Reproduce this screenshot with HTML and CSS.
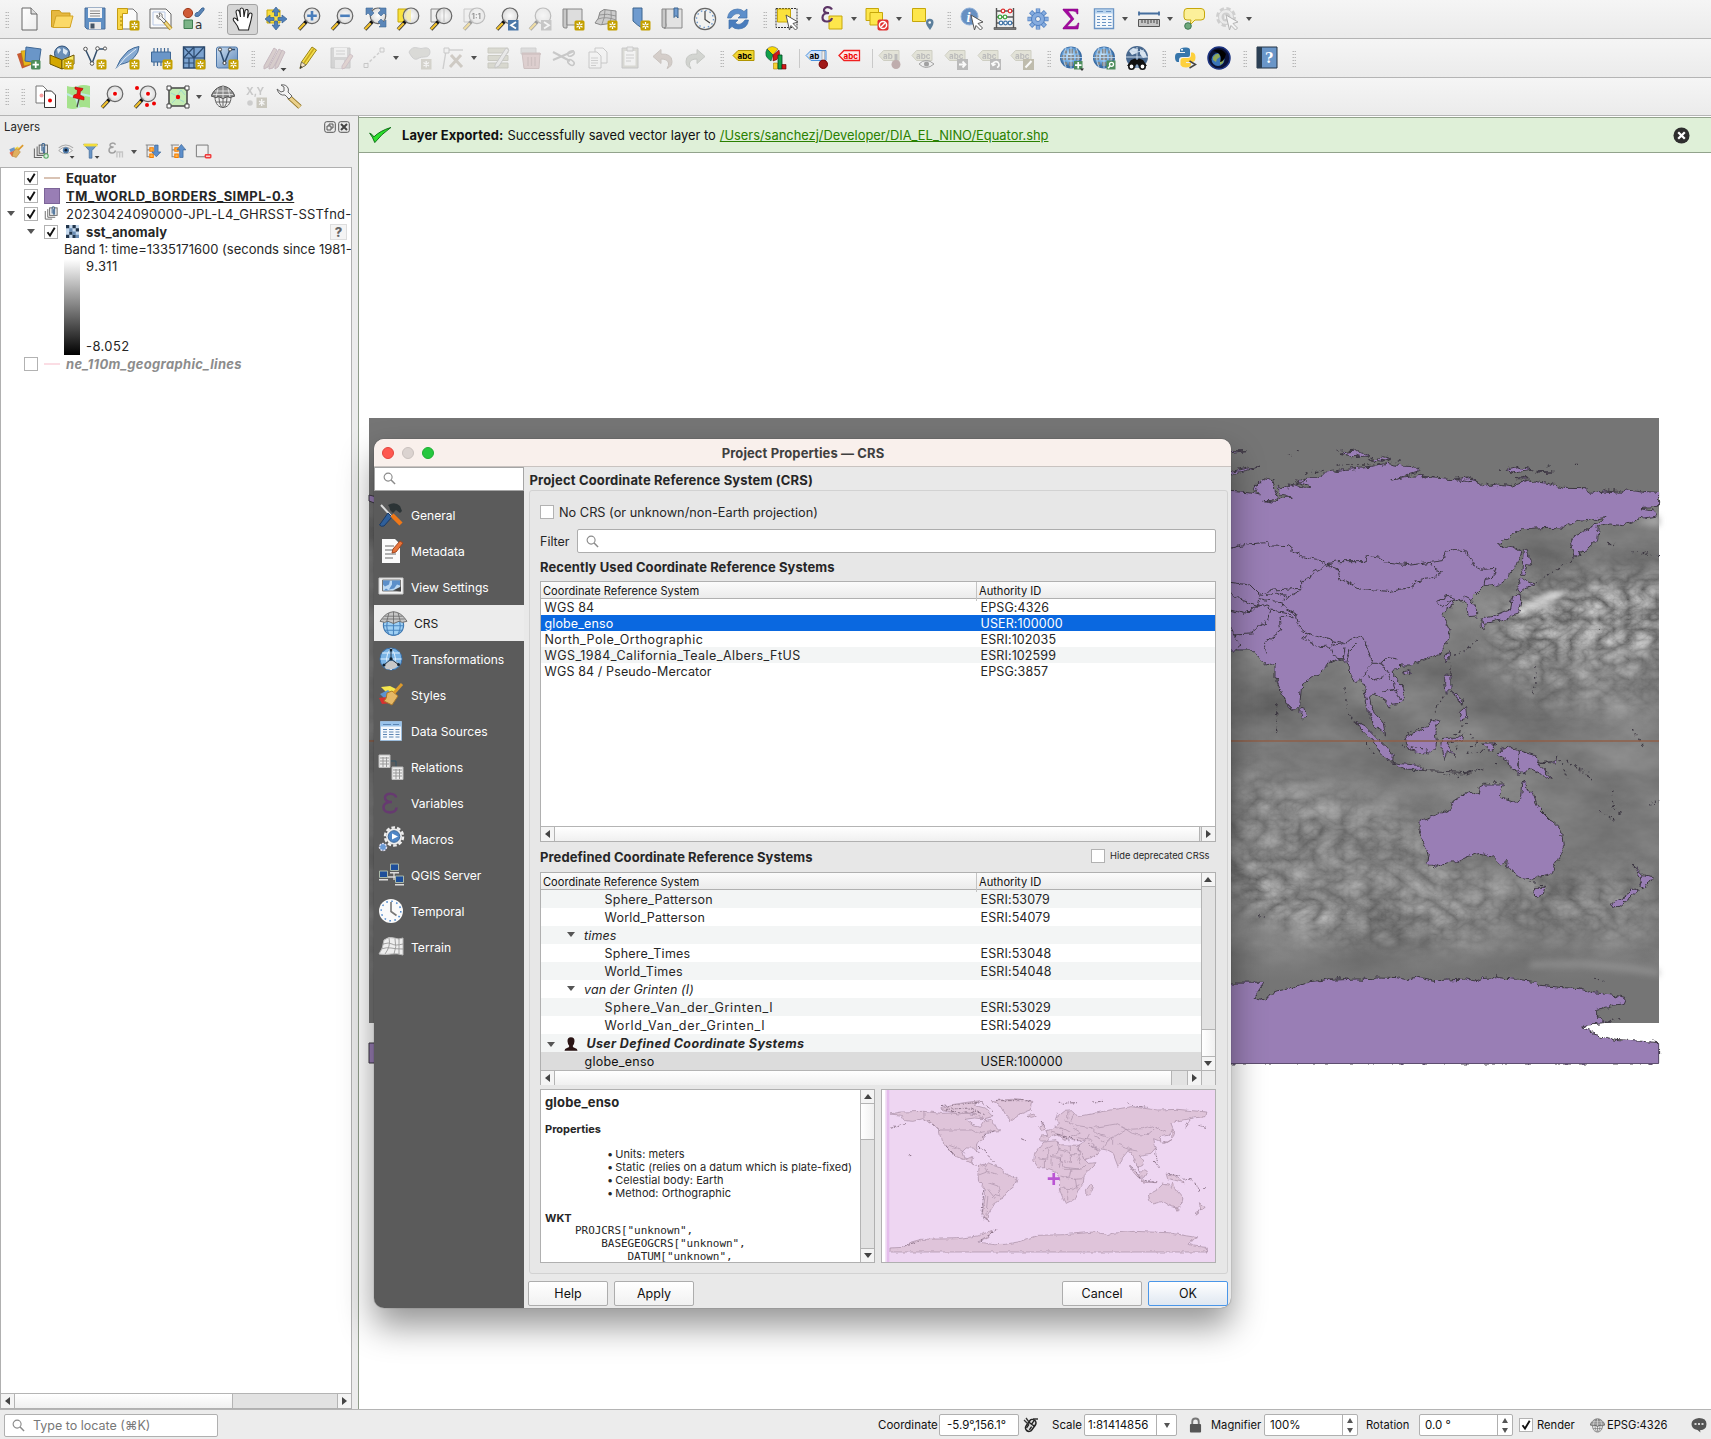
FILE: index.html
```html
<!DOCTYPE html>
<html lang="en">
<head>
<meta charset="utf-8">
<title>Project Properties — CRS</title>
<link rel="stylesheet" href="styles.css">
</head>
<body>
<svg class="defs" width="0" height="0">
  <defs>
    <linearGradient id="gBlue" x1="0" y1="0" x2="1" y2="1"><stop offset="0" stop-color="#cfe0f2"/><stop offset="1" stop-color="#5b86b8"/></linearGradient>
    <linearGradient id="gPage" x1="0" y1="0" x2="1" y2="1"><stop offset="0" stop-color="#fff"/><stop offset="1" stop-color="#ececec"/></linearGradient>
    <radialGradient id="gGlass"><stop offset="0" stop-color="#fff"/><stop offset="1" stop-color="#d8d8d8"/></radialGradient>
    <radialGradient id="gGlobe" cx=".45" cy=".4"><stop offset="0" stop-color="#d6efff"/><stop offset=".6" stop-color="#78b0e4"/><stop offset="1" stop-color="#3a6ea5"/></radialGradient>
  </defs>
  <symbol id="star" viewBox="0 0 24 24"><rect x="13.5" y="13.5" width="10" height="10" rx="1.5" fill="#c4a000"/><path d="M18.5 15v7M15.5 16.8l6 3.4M21.5 16.800l-6 3.400" stroke="#fff" stroke-width="1.300"/><circle cx="18.500" cy="18.500" r="1" fill="#c4a000"/></symbol>
  <symbol id="mag" viewBox="0 0 24 24"><path d="M9.500 14.500L2 22.500" stroke="#333" stroke-width="3.600"/><path d="M8 16L2 22.200" stroke="#f2c22e" stroke-width="2.200"/><path d="M10.500 13L7.500 16" stroke="#111" stroke-width="3"/><circle cx="15" cy="8.800" r="7.800" fill="url(#gGlass)" fill-opacity=".85" stroke="#666" stroke-width="1.200"/></symbol>
  <symbol id="globe" viewBox="0 0 24 24"><circle cx="12" cy="11.500" r="11" fill="#3566a0"/><circle cx="12" cy="11.500" r="10.500" fill="url(#gGlobe)"/><path d="M5 4.500h3v3H5zM10 3h4v4.500h-4zM16 4.500h3v3h-3zM3 9h4v5H3zM9 9h6v5H9zM17 9h4v5h-4zM5 16h3v3H5zM10 16h4v4h-4zM16 16h3v3h-3z" fill="#858585" opacity=".9"/><path d="M1 11.500h22M12 .500v22M7 2c-3 6-3 13 0 19M17 2c3 6 3 13 0 19" stroke="#b9d8f6" fill="none" stroke-width=".900"/></symbol>
  <symbol id="cursor" viewBox="0 0 24 24"><path d="M11 8l12 7-5 1.500 4.500 4.500-2 2-4.500-4.500-1.500 4.500z" fill="#fff" stroke="#555" stroke-width="1"/></symbol>
  <symbol id="tagg" viewBox="0 0 24 24"><path d="M1 7.500L5.500 2.500H21v10H5.500z" fill="#dedecf" stroke="#c3c3b4"/></symbol>
  <symbol id="fn" viewBox="0 0 24 24"><path d="M13 5.500C11 2 4.500 2.500 5 6.500c.3 2 2.500 2.700 5 2.500-4 0-6.500 1.500-6.500 4.500 0 5 8 5.500 9.500.5" fill="none" stroke="currentColor" stroke-width="2.200"/></symbol>
  <symbol id="lens" viewBox="0 0 14 14"><circle cx="5.500" cy="5.500" r="4.300" fill="none" stroke="#8a8a8a" stroke-width="1.200"/><path d="M8.700 8.700L13 13" stroke="#8a8a8a" stroke-width="1.600"/></symbol>
  <symbol id="tick" viewBox="0 0 12 12"><path d="M2.500 6.200L5 9.500 9.700 1.800" fill="none" stroke="#111" stroke-width="1.900"/></symbol>
  <symbol id="sheets" viewBox="0 0 24 24"><path d="M2 8v13h11M6 5v13h12" stroke="#666" stroke-width="1.500" fill="none"/><rect x="9" y="3" width="12" height="12" fill="#f2f2f2" stroke="#666" stroke-width="1.500"/><path d="M13 12V2q2-3 4 0v11q-1 2-2 0V5" stroke="#35608e" fill="none" stroke-width="1.500"/></symbol>
  <symbol id="dome" viewBox="0 0 24 24"><path d="M4 12c0 14 16 14 16 0z" fill="#eee" stroke="#5b5b5b"/><path d="M0 11Q4 2 12 1q8 1 12 10l-5 1.500-2-1-5 2-5-2-2 1z" fill="#8a8a8a" stroke="#555" stroke-width="1"/><path d="M7 3.500L5 12M12 1v12M17 3.500l2 8.500M4 6h16M2 9.500h20" stroke="#eee" stroke-width=".8"/><path d="M12 13v9M8 13q0 6 2.500 9M16 13q0 6-2.500 9M5 17h14" stroke="#666" fill="none" stroke-width="1"/></symbol>
</svg>

<header class="toolbars">
  <div class="bar">
    <i class="grip first"></i>
    <svg class="ic" viewBox="0 0 24 24"><path d="M5 1h9l6 6v16H5z" fill="url(#gPage)" stroke="#666"/><path d="M14 1v6h6" fill="#ddd" stroke="#666"/></svg>
    <svg class="ic" viewBox="0 0 24 24"><path d="M1.500 3.500h8l2 2.500h8.500V20H1.500z" fill="#e6b840" stroke="#c99a1c"/><path d="M3 20.500L6 9h17l-3 11.500z" fill="#fbd968" stroke="#d3a426"/></svg>
    <svg class="ic" viewBox="0 0 24 24"><path d="M2 1h20v21H4l-2-2z" fill="#5f8fc4" stroke="#4a6f9b"/><path d="M5 1h14v10H5z" fill="#f4f4f4"/><path d="M7 4h10M7 6.500h10M7 9h10" stroke="#888"/><path d="M6 15h12v7H6z" fill="#e8e8e8"/><path d="M7.500 16.500h4v5h-4z" fill="#456"/></svg>
    <svg class="ic" viewBox="0 0 24 24"><path d="M5 2h12l4 4v16H5z" fill="#fafafa" stroke="#777"/><path d="M1.500 1.500h10v5h-5v16h-5z" fill="#f8d648" stroke="#c49c12"/><path d="M4 10h2M4 14h2M4 18h2" stroke="#a07c00"/><use href="#star"/></svg>
    <svg class="ic" viewBox="0 0 24 24"><path d="M1 2h16l5 5v14H1z" fill="#fafafa" stroke="#666"/><path d="M4 5h12v13H4z" fill="none" stroke="#b9c9e6"/><path d="M15 14l7 8" stroke="#b58e20" stroke-width="4"/><path d="M15 14l7 8" stroke="#f0d988" stroke-width="2"/><path d="M8 8q-1 4 3 4l4 4 2-2-4-4q1-4-3-4l1 3-1.500 1.500z" fill="#f2f2f2" stroke="#777"/></svg>
    <svg class="ic" viewBox="0 0 24 24"><circle cx="6" cy="6" r="4.600" fill="#cf5a36" stroke="#a03c1e"/><path d="M13 9q0-4 3-3.500L20 1h2v2l-5 6q-2 1-4 0z" fill="#5b86b8" stroke="#3f6896"/><path d="M2 13h8.500v8.500H2z" fill="#7bb487" stroke="#3f7d50"/><text x="13" y="22" class="t11">a</text></svg>
    <i class="grip"></i>
    <span class="ic btn on"><svg viewBox="0 0 24 24"><path d="M8 23q-1-4-4-7.500Q1 12 3 11q2-.5 4 3L5 5q0-2 1.500-2T8.500 5l1 5-.5-7q0-2 1.700-2T12.500 3l.5 7 1-6q.5-1.700 2-1.400T17 5l-.5 6 1.500-4q1-1.500 2.200-.8T21 8q-1 6-2 9t-1.500 6z" fill="#fff" stroke="#222" stroke-width="1.100"/></svg></span>
    <svg class="ic" viewBox="0 0 24 24"><path d="M3 3h13v13H3z" fill="#f8dc3c" stroke="#c6a70a"/><path d="M12 0l4 5h-2.500v4h-3V5H8zM12 23l4-5h-2.500v-4h-3v4H8zM1 12l5-4v2.500h4v3H6V16zM23 12l-5-4v2.500h-4v3h4V16z" fill="#4f81bb" stroke="#3a628f" stroke-width=".7"/></svg>
    <svg class="ic" viewBox="0 0 24 24"><use href="#mag"/><path d="M15 4v9.600M10.200 8.800h9.600" stroke="#4a7ebb" stroke-width="2.600"/></svg>
    <svg class="ic" viewBox="0 0 24 24"><use href="#mag"/><path d="M10.200 8.800h9.600" stroke="#4a7ebb" stroke-width="2.600"/></svg>
    <svg class="ic" viewBox="0 0 24 24"><use href="#mag"/><path d="M3 1h7L8 3l3 3-3 3-3-3-2 2zM23 1h-7l2 2-3 3 3 3 3-3 2 2zM23 20h-7l2-2-3-3 3-3 3 3 2-2z" fill="#5b86b8" stroke="#3f6896" stroke-width=".6"/></svg>
    <svg class="ic" viewBox="0 0 24 24"><path d="M2 2h9v13H2z" fill="#f9e23c" stroke="#c6a70a"/><use href="#mag"/><path d="M15 2.500a6.500 6.500 0 0 0 0 12.600z" fill="#f4ecb0"/></svg>
    <svg class="ic" viewBox="0 0 24 24"><path d="M2 2h9v13H2z" fill="#eee" stroke="#888"/><use href="#mag"/><path d="M15 2v13" stroke="#bbb"/></svg>
    <svg class="ic off" viewBox="0 0 24 24"><path d="M2 2h9v13H2z" fill="#eee" stroke="#888"/><use href="#mag"/><text x="9.500" y="12" class="tagtx">1:1</text></svg>
    <svg class="ic" viewBox="0 0 24 24"><use href="#mag"/><path d="M13 13h10.500v10.500H13z" fill="#4a77a8"/><path d="M21 15l-5 3.200 5 3.200" fill="none" stroke="#fff" stroke-width="1.800"/></svg>
    <svg class="ic off" viewBox="0 0 24 24"><use href="#mag"/><path d="M13 13h10.500v10.500H13z" fill="#888"/><path d="M16 15l5 3.200-5 3.200" fill="none" stroke="#fff" stroke-width="1.800"/></svg>
    <svg class="ic" viewBox="0 0 24 24"><path d="M2 2h4v19H4q-2 0-2-2z" fill="#c8c8c8" stroke="#888"/><path d="M6 2h15v16H6z" fill="#ddd" stroke="#888"/><use href="#star"/></svg>
    <svg class="ic" viewBox="0 0 24 24"><path d="M1 16Q5 12 6 5q4-4 8-2l8 1v13q-5-2-10 0T1 16z" fill="#cdcdcd" stroke="#888"/><path d="M5 8q8-2 17 1M4 12q8-3 18 1M11 3q0 8-3 14M17 4q1 7-1 12" stroke="#888" fill="none" stroke-width=".8"/><use href="#star"/></svg>
    <svg class="ic" viewBox="0 0 24 24"><path d="M6 1h9v20l-4.500-3L6 14z" fill="#6f9bcf" stroke="#3c658f"/><use href="#star"/></svg>
    <svg class="ic" viewBox="0 0 24 24"><path d="M2 2h4v19H4q-2 0-2-2z" fill="#c8c8c8" stroke="#888"/><path d="M6 2h16v19H4q3 0 2-5z" fill="#e2e2e2" stroke="#888"/><path d="M14 1h4v10l-2-2.500-2 2z" fill="#6f9bcf" stroke="#3c658f"/></svg>
    <svg class="ic" viewBox="0 0 24 24"><circle cx="12" cy="12" r="10.600" fill="#f2f2f0" stroke="#666" stroke-width="1.200"/><circle cx="12" cy="12" r="8.500" fill="none" stroke="#6c98ce" stroke-width="1.400" stroke-dasharray="1.500 2.950"/><path d="M12 4v8.500l5 3.500" stroke="#444" fill="none" stroke-width="1.200"/></svg>
    <svg class="ic" viewBox="0 0 24 24"><path d="M1.500 11q1-8.500 10-9 4 0 6.500 2.500L21 2v9h-9l3-3q-5-4-10 3z" fill="#5d8fcb" stroke="#3f70aa" stroke-width=".7"/><path d="M22.500 13q-1 8.500-10 9-4 0-6.500-2.500L3 22v-9h9l-3 3q5 4 10-3z" fill="#4a7dbd" stroke="#3f70aa" stroke-width=".7"/></svg>
    <i class="grip"></i>
    <svg class="ic" viewBox="0 0 24 24"><path d="M1 1.500h21v19H1z" fill="none" stroke="#333" stroke-dasharray="2 1"/><path d="M2.500 2h13v13h-13z" fill="#fbe13c" stroke="#c6a70a"/><use href="#cursor"/></svg><b class="dd"></b>
    <svg class="ic" viewBox="0 0 24 24"><path d="M9 9h13v13H9z" fill="#fde64c" stroke="#c6a70a"/><g class="vio"><use href="#fn" x="-1" y="-3"/></g></svg><b class="dd"></b>
    <svg class="ic" viewBox="0 0 24 24"><path d="M1 1.500h12.500v12H1z" fill="#fde64c" stroke="#c6a70a"/><path d="M5 5.500h12.500v12.500H5z" fill="#fde64c" stroke="#c6a70a"/><rect x="12.500" y="12.500" width="11" height="11" rx="2" fill="#e03030"/><circle cx="18" cy="18" r="3.600" fill="none" stroke="#fff" stroke-width="1.500"/><path d="M15.500 20.500l5-5" stroke="#fff" stroke-width="1.500"/></svg><b class="dd"></b>
    <svg class="ic" viewBox="0 0 24 24"><path d="M1.500 1.500h13v13h-13z" fill="#fde64c" stroke="#c6a70a"/><path d="M19 23q-4-5-4-7.500a3.600 3.600 0 0 1 7.500 0Q22.500 18 19 23z" fill="#5c7f9c"/><circle cx="18.700" cy="15.500" r="1.300" fill="#fff"/></svg>
    <i class="grip"></i>
    <svg class="ic" viewBox="0 0 24 24"><circle cx="9.500" cy="9.500" r="8.500" fill="#6790c2" stroke="#90b0d8"/><text x="6.500" y="14.500" class="info">i</text><use href="#cursor"/></svg>
    <svg class="ic" viewBox="0 0 24 24"><path d="M3.500 1v20M20.500 1v20M3.500 4h17M3.500 10h17M3.500 16h17" stroke="#555" stroke-width="1.400" fill="none"/><path d="M1 20.500h22v2H1z" fill="#777" stroke="#444" stroke-width=".6"/><g fill="#fff" stroke-width="1.300"><g stroke="#d33"><circle cx="10" cy="4" r="1.800"/><circle cx="17" cy="4" r="1.800"/></g><g stroke="#4a4"><circle cx="7" cy="10" r="1.800"/><circle cx="12" cy="10" r="1.800"/></g><g stroke="#47a"><circle cx="8" cy="16" r="1.800"/><circle cx="12.500" cy="16" r="1.800"/><circle cx="17" cy="16" r="1.800"/></g></g></svg>
    <svg class="ic" viewBox="0 0 24 24"><g stroke="#4f7fc0" stroke-width="4.400"><path d="M12 1.500v21M1.500 12h21M4.600 4.600l14.800 14.800M19.400 4.600L4.600 19.400"/></g><g stroke="#86acdf" stroke-width="3"><path d="M12 2v20M2 12h20M5 5l14 14M19 5L5 19"/></g><circle cx="12" cy="12" r="6.500" fill="#86acdf" stroke="#4f7fc0"/><circle cx="12" cy="12" r="2.500" fill="#f0f0f0" stroke="#4f7fc0"/></svg>
    <svg class="ic" viewBox="0 0 24 24"><path d="M4 2h15v5h-1q-.5-3-4-3H9l6 8-7 7.500h7q3 0 4-3.500h1l-1 6H4v-1l8-9L4 3z" fill="#a408a0" stroke="#7b0079" stroke-width=".5"/></svg>
    <svg class="ic" viewBox="0 0 24 24"><path d="M2.500 2h19v19.500h-19z" fill="#f4f8fc" stroke="#6a94c4" stroke-width="1.400"/><path d="M3 2.500h18v4H3z" fill="#b7d3ee"/><path d="M5 9.500h3M5 12.500h3M5 15.500h3M5 18.500h3M10 9.500h4M10 12.500h4M10 15.500h4M10 18.500h4M16 9.500h3.500M16 12.500h3.500M16 15.500h3.500M16 18.500h3.500M5 4.500h6M14 4.500h5" stroke="#6a94c4" stroke-width="1.200"/></svg><b class="dd"></b>
    <svg class="ic" viewBox="0 0 24 24"><path d="M2 6.500h20M2 4.500v4M22 4.500v4" stroke="#456e9e" stroke-width="1.800"/><path d="M1.500 12.500h21v7h-21z" fill="#c6c6c6" stroke="#555"/><path d="M5 13v3M8 13v3M11 13v4M14 13v3M17 13v3M20 13v4" stroke="#444"/></svg><b class="dd"></b>
    <svg class="ic" viewBox="0 0 24 24"><path d="M5 1.500h14q3.500 0 3.500 3.500v5q0 3-3.500 3h-6L8 18l1-5H5q-3 0-3-3V5q0-3.500 3-3.500z" fill="#fcf09a" stroke="#c6a70a"/><circle cx="6" cy="19" r="3.300" fill="#6ea87c" stroke="#3e7850"/></svg>
    <svg class="ic off" viewBox="0 0 24 24"><circle cx="11" cy="10" r="8.500" fill="none" stroke="#999" stroke-width="3" stroke-dasharray="4.200 2.500"/><circle cx="11" cy="10" r="7.500" fill="#e2e2e2" stroke="#999"/><circle cx="11" cy="10" r="4.500" fill="#999"/><path d="M9.500 7.500l4 2.500-4 2.500z" fill="#fff"/><use href="#cursor"/></svg><b class="dd"></b>
  </div>

  <div class="bar second">
    <i class="grip first"></i>
    <svg class="ic" viewBox="0 0 24 24"><path d="M0 8l9-3 5 14-9 3.500z" fill="#c75a33"/><path d="M4 5l10-1 1 14-8 2z" fill="#e6b51c" stroke="#a87e00" stroke-width=".5"/><path d="M9 1l15 2-2 14-14-2z" fill="#6a96c8" stroke="#3f6896"/><rect x="14" y="14" width="9.500" height="9.500" rx="1.500" fill="#4e8d5c"/><path d="M18.700 15.500v6.400M15.500 18.700h6.400" stroke="#fff" stroke-width="1.700"/></svg>
    <svg class="ic" viewBox="0 0 24 24"><circle cx="12" cy="7.500" r="7.500" fill="#6a8fb8" stroke="#2f5078"/><path d="M7 3q3-2 4 1l-3 4zM13 2l5 3-2 4-3-2z" fill="#dce8f4"/><path d="M0 9l12 5v9L0 18z" fill="#d4a800" stroke="#6c5400"/><path d="M24 9l-12 5v9l12-5z" fill="#f8e868" stroke="#6c5400"/><use href="#star"/></svg>
    <svg class="ic" viewBox="0 0 24 24"><path d="M2.500 3.500l6.500 14L14.500 3h8" fill="none" stroke="#34506e" stroke-width="1.500"/><g fill="#fff" stroke="#555"><circle cx="2.500" cy="3" r="1.800"/><circle cx="9" cy="17.500" r="1.800"/><circle cx="14.500" cy="2.500" r="1.800"/><circle cx="22" cy="2.500" r="1.600"/></g><use href="#star"/></svg>
    <svg class="ic" viewBox="0 0 24 24"><path d="M0 23Q3 13 12 5q6-4 11-4.500 0 6-5 11-4 5-14 7z" fill="#86aad2" stroke="#3f6896"/><path d="M0 23Q8 11 20 3" stroke="#e4eef8" fill="none"/><use href="#star"/></svg>
    <svg class="ic" viewBox="0 0 24 24"><path d="M5 2v18M8.500 2v18M12 2v18M15.500 2v18M19 2v18" stroke="#3f6896" stroke-width="1.200"/><path d="M2.500 6h19v10h-19z" fill="#6a96c8" stroke="#3f6896"/><use href="#star"/></svg>
    <svg class="ic" viewBox="0 0 24 24"><path d="M1.500 1h21v21h-21z" fill="#7ba3d0" stroke="#2c4a6e" stroke-width="1.400"/><path d="M12 1v21M1.500 12h21M1.500 1L12 12M12 1L1.500 12M22 1L12 12M1.500 17H12M7 12v10" stroke="#2c4a6e" fill="none" stroke-width="1.200"/><use href="#star"/></svg>
    <svg class="ic" viewBox="0 0 24 24"><rect x="1.500" y="1" width="21" height="21" rx="2" fill="url(#gBlue)" stroke="#4c76a8"/><path d="M5 4l4.500 13L15 3.500h5" fill="none" stroke="#2c4a6e" stroke-width="1.500"/><g fill="#fff" stroke="#444"><circle cx="5" cy="3.500" r="1.600"/><circle cx="9.500" cy="17" r="1.600"/><circle cx="15" cy="3.500" r="1.600"/></g><use href="#star"/></svg>
    <i class="grip"></i>
    <svg class="ic" viewBox="0 0 24 24"><g opacity=".4"><path d="M1 20L11 2l3 2L5 21l-4 2zM6 21L16 3l3 2L10 22l-4 1z" fill="#b39a98" stroke="#867"/><path d="M12 20L19 4l3 2-7 15-3 2z" fill="#b39a98" stroke="#867"/></g><path d="M17.500 22h6l-3 3.200z" fill="#444"/></svg>
    <svg class="ic" viewBox="0 0 24 24"><path d="M4 22.500L5.500 16 16 1l4.500 3L10 19z" fill="#f4dd4c" stroke="#9a8416"/><path d="M8 17L18 2.500" stroke="#c9a91c" stroke-width="1.500"/><path d="M4 22.500L5.500 16l4.500 3z" fill="#f6e3c2" stroke="#555" stroke-width=".7"/><path d="M4 22.500l.7-2.800 1.600 1.200z" fill="#222"/></svg>
    <svg class="ic off" viewBox="0 0 24 24"><path d="M2 2h19v20H2z" fill="#aaa" stroke="#888"/><path d="M5 2h13v9H5z" fill="#eee"/><path d="M7 5h9M7 8h9" stroke="#999"/><path d="M6 14h9v8H6z" fill="#ddd"/><path d="M13 20l8-12 3 2-8 12-3 1z" fill="#c6a6a0" stroke="#978"/></svg>
    <svg class="ic off" viewBox="0 0 24 24"><path d="M4 19L20 4" stroke="#999" stroke-dasharray="3 2" stroke-width="1.500"/><path d="M2 17.500h4v4H2zM18 2h4v4h-4z" fill="#eee" stroke="#888"/></svg><b class="dd"></b>
    <svg class="ic off" viewBox="0 0 24 24"><path d="M1 6q3-6 9-4 3 1 6 0 6-1 6 4t-6 5q-3 0-5 1-4 3-7-1T1 6z" fill="#b5b5ae" stroke="#999"/><rect x="13" y="13" width="10.500" height="10.500" fill="#aaa594"/><path d="M18.200 15v6.500M15.500 16.500l5.500 3.500M21 16.500L15.500 20" stroke="#fff" stroke-width="1.300"/></svg>
    <svg class="ic off" viewBox="0 0 24 24"><path d="M5 5l-3 18M5 4h17" stroke="#999" stroke-width="1.400"/><path d="M3 2h5v5H3z" fill="#eee" stroke="#888"/><path d="M9 21L20 9M10 9l11 12" stroke="#9b9080" stroke-width="3"/></svg><b class="dd"></b>
    <svg class="ic off" viewBox="0 0 24 24"><path d="M2 2h20v5H2zM2 9.500h20v5H2zM2 17h20v5H2z" fill="#b5b59e" stroke="#8d8d78"/><path d="M9 19L20 2l3 2-10 16-4 2z" fill="#ddd" stroke="#888"/></svg>
    <svg class="ic off" viewBox="0 0 24 24"><path d="M2 2h15v6H2z" fill="#bbb" stroke="#999"/><path d="M3 7h18l-1 15.500H5z" fill="#c29c9c" stroke="#977"/><path d="M3 8h19M9 11v9M12.500 11v9M16 11v9" stroke="#977" stroke-width="1.300"/></svg>
    <svg class="ic off" viewBox="0 0 24 24"><path d="M1 6l17 9M1 14L22 5" stroke="#888" stroke-width="2"/><ellipse cx="19" cy="7.500" rx="3.500" ry="2.300" fill="none" stroke="#888" stroke-width="1.500" transform="rotate(-30 19 7.500)"/><ellipse cx="19" cy="16.500" rx="3.500" ry="2.300" fill="none" stroke="#888" stroke-width="1.500" transform="rotate(35 19 16.500)"/></svg>
    <svg class="ic off" viewBox="0 0 24 24"><path d="M10 2h8l4 4v11H10z" fill="#f5f5f5" stroke="#888"/><path d="M4 6h8l4 4v12H4z" fill="#f5f5f5" stroke="#888"/><path d="M6 12h7M6 14.500h7M6 17h7M6 19.500h5" stroke="#999"/></svg>
    <svg class="ic off" viewBox="0 0 24 24"><path d="M4 2h16v20H4z" fill="#b5b5a8" stroke="#888"/><path d="M6.500 5h11v14.500h-11z" fill="#f5f5f5"/><path d="M9 1h6v4H9z" fill="#ddd" stroke="#888"/><path d="M8 9h8M8 12h8M8 15h5" stroke="#999"/></svg>
    <svg class="ic off" viewBox="0 0 24 24"><path d="M2 10.500l8-7v4.500q11-.5 11 7.500 0 5-5 7 2-3 1.500-5.500Q16.500 13 10 13v4.500z" fill="#a8978c" stroke="#8a7a70"/></svg>
    <svg class="ic off" viewBox="0 0 24 24"><path d="M21 10.500l-8-7v4.500Q2 7.500 2 15.500q0 5 5 7-2-3-1.500-5.500Q6.500 13 13 13v4.500z" fill="#a3a89e" stroke="#80867c"/></svg>
    <i class="grip"></i>
    <svg class="ic" viewBox="0 0 24 24"><path d="M1 9.500L6 4.500h16v10H6z" fill="#f0d430" stroke="#b09400"/><text x="5.500" y="12.500" class="tagtx">abc</text></svg>
    <svg class="ic" viewBox="0 0 24 24"><path d="M8 9L2 3q5-5 11 0z" fill="#f8d800" stroke="#555" stroke-width=".5"/><path d="M8 9L2 3q-4 7 4 12z" fill="#12a04a" stroke="#033" stroke-width=".5"/><path d="M8 9l6-5q3 9-6 11z" fill="#d01818" stroke="#500" stroke-width=".5"/><path d="M8.500 17h4v6h-4z" fill="#f8d030" stroke="#a80" stroke-width=".6"/><path d="M13 9h4v14h-4z" fill="#12a04a" stroke="#042" stroke-width=".8"/><path d="M17 18.500h4v4.500h-4z" fill="#d01818" stroke="#500" stroke-width=".6"/></svg>
    <i class="vsep"></i>
    <svg class="ic" viewBox="0 0 24 24"><path d="M1 9.500L6 4.500h15v10H6z" fill="#cfe3fa" stroke="#4a90dc"/><text x="4.500" y="12.500" class="tagtx">ab</text><path d="M17 5h2.500v11H17z" fill="#eee" stroke="#999" stroke-width=".6"/><circle cx="18.300" cy="18.300" r="4.200" fill="#a01818" stroke="#700"/></svg>
    <svg class="ic" viewBox="0 0 24 24"><path d="M1 9.500L6 4.500h15.500v10H6z" fill="#fde8e8" stroke="#f02020" stroke-width="1.300"/><text x="5.500" y="12.500" class="tagtx" fill="#e00">abc</text></svg>
    <i class="vsep"></i>
    <svg class="ic off2" viewBox="0 0 24 24"><use href="#tagg" y="2"/><text x="5" y="12.500" class="tagtx" fill="#aaa">ab</text><path d="M18 8v10" stroke="#aaa" stroke-width="3"/><circle cx="18" cy="18.500" r="4.500" fill="#b09898"/></svg>
    <svg class="ic off2" viewBox="0 0 24 24"><use href="#tagg" y="2"/><text x="5" y="12.500" class="tagtx" fill="#aaa">abc</text><path d="M8 18q7-7 15 0-8 7-15 0z" fill="#eee" stroke="#888"/><circle cx="15.500" cy="18" r="2.500" fill="#888"/></svg>
    <svg class="ic off2" viewBox="0 0 24 24"><use href="#tagg" y="2"/><text x="5" y="12.500" class="tagtx" fill="#aaa">abc</text><path d="M13 13h11v11H13z" fill="#aaa"/><path d="M15 18.500h6M18.500 15.500l3 3-3 3" stroke="#fff" stroke-width="1.800" fill="none"/></svg>
    <svg class="ic off2" viewBox="0 0 24 24"><use href="#tagg" y="2"/><text x="5" y="12.500" class="tagtx" fill="#aaa">abc</text><path d="M13 13h11v11H13z" fill="#aaa"/><path d="M16 19a3 3 0 1 1 4 2.500M14.500 17l1.500 2.500 2.500-1.500" stroke="#fff" stroke-width="1.600" fill="none"/></svg>
    <svg class="ic off2" viewBox="0 0 24 24"><use href="#tagg" y="2"/><text x="5" y="12.500" class="tagtx" fill="#aaa">abc</text><path d="M13 13h11v11H13z" fill="#b0ac98"/><path d="M15.500 21.500l6-6.500" stroke="#fff" stroke-width="2"/></svg>
    <i class="grip"></i>
    <svg class="ic" viewBox="0 0 24 24"><use href="#globe"/><path d="M15 15h8.500v8.500H15z" fill="#4e8d5c"/><path d="M19.200 16v6.500M16 19.200h6.500" stroke="#fff" stroke-width="1.700"/><path d="M21 22.500h4l-2 2.500z" fill="#333"/></svg>
    <svg class="ic" viewBox="0 0 24 24"><use href="#globe"/><path d="M14.500 14.500h9v9h-9z" fill="#4e8d5c"/><circle cx="19.500" cy="18.300" r="2" fill="none" stroke="#fff" stroke-width="1.300"/><path d="M18 20l-2 2.200" stroke="#fff" stroke-width="1.500"/></svg>
    <svg class="ic" viewBox="0 0 24 24"><circle cx="12" cy="11" r="11" fill="#48688e"/><path d="M4 5l4-3 5 1-1 4-5 2zM15 3l5 3 2 5-4 1-3-4z" fill="#d8e4f0"/><path d="M1 11h22M12 1v21M5 4q6 4 14 0" stroke="#c9d9ea" fill="none"/><path d="M6 14l4-1.500 2 1.500 2-1.500 4 1.500 4 6H14l-2-2-2 2H2z" fill="#111"/><circle cx="6.500" cy="20.500" r="2.700" fill="#fff" stroke="#111" stroke-width="1.600"/><circle cx="17.500" cy="20.500" r="2.700" fill="#fff" stroke="#111" stroke-width="1.600"/></svg>
    <i class="grip"></i>
    <svg class="ic" viewBox="0 0 24 24"><path d="M11 1.500q5-.5 5 2.500v5q0 2-2 2H8q-3 0-3 3v2H3q-2-1-2-5t3-4h7V6H6V4q0-2.500 5-2.500z" fill="#3776ab"/><circle cx="8" cy="3.700" r="1" fill="#fff"/><path d="M17 6.500h2q2.500 1 2.500 5t-3 4.500H12v1h5v2q-1 2.500-5 2.500T6.500 19v-4q0-3 2.500-3h5q3 0 3-3z" fill="#fdd03c"/><path d="M15.500 15l6 3.500-6 3.500" stroke="#444" fill="none" stroke-width="1.500"/></svg>
    <svg class="ic" viewBox="0 0 24 24"><circle cx="12" cy="12" r="11" fill="#0a1238" stroke="#1d3480" stroke-width="1.500"/><circle cx="11" cy="13.500" r="6.500" fill="#3a73b8"/><path d="M6 11q3-4 6-3l1 3-3 2-1 3-3-2zM13 14l4-1-1 4-3 2z" fill="#8fa85a"/><path d="M6 5q8-4 13 3-2 8-6 8 3-9-7-11z" fill="#000"/></svg>
    <i class="grip"></i>
    <svg class="ic" viewBox="0 0 24 24"><path d="M2 1h20v21H2z" fill="#6a96c8" stroke="#234"/><path d="M2 1h5v21H2z" fill="#2b3f54"/><text x="10" y="17" class="q">?</text></svg>
    <i class="grip"></i>
  </div>

  <div class="bar third">
    <i class="grip first"></i><i class="grip second"></i>
    <svg class="ic" viewBox="0 0 24 24"><path d="M2 1h7l4 4v13H2z" fill="#fff" stroke="#777"/><path d="M10.500 6h7l4 4v12.500h-11z" fill="#fff" stroke="#333"/><circle cx="7.500" cy="10.500" r="2" fill="#f9a0a0"/><circle cx="16" cy="15.500" r="2" fill="#e00"/></svg>
    <svg class="ic" viewBox="0 0 24 24"><path d="M0 1q6 2 11 0t12 0v22q-7-2-12 0T0 23z" fill="#a5e28c"/><path d="M0 9l9 4 3 10M10 1l4 8 9 2" stroke="#bfe9e4" stroke-width="2" fill="none"/><path d="M12 14l-2 8" stroke="#444" stroke-width="1.300"/><path d="M8 2l8 1.500-1 2-1.500.5-.5 4 4 2v3L6 12.500l1-2.500 3-1L10.500 5 8 4z" fill="#ee1010" stroke="#a00" stroke-width=".6"/></svg>
    <svg class="ic" viewBox="0 0 24 24"><use href="#mag"/><circle cx="15" cy="8.800" r="2" fill="#e00"/></svg>
    <svg class="ic" viewBox="0 0 24 24"><use href="#mag"/><g fill="#e00"><circle cx="15" cy="8.800" r="2"/><circle cx="4" cy="3" r="2"/><circle cx="14" cy="20" r="2"/><circle cx="21" cy="18.500" r="2"/></g></svg>
    <svg class="ic" viewBox="0 0 24 24"><path d="M3 3h18v18H3z" fill="#c4ecb4" stroke="#444" stroke-width="1.500"/><path d="M5 8l6 3 4-6 4 5M6 18l5-5 7 4" stroke="#9fd8c8" fill="none"/><g fill="#fff" stroke="#444"><path d="M1 1h4v4H1zM19 1h4v4h-4zM1 19h4v4H1zM19 19h4v4h-4z"/></g><circle cx="12" cy="12" r="2.200" fill="#e00"/></svg><b class="dd"></b>
    <svg class="ic" viewBox="0 0 24 24"><use href="#dome"/></svg>
    <svg class="ic off" viewBox="0 0 24 24"><text x="2" y="9.500" class="xy">X,Y</text><circle cx="6" cy="18" r="2.800" fill="#999"/><rect x="12.500" y="12.500" width="10.500" height="10.500" fill="#8f8a72"/><path d="M17.700 14v7M15 16l5.500 3.500M20.500 16L15 19.500" stroke="#fff" stroke-width="1.300"/></svg>
    <svg class="ic" viewBox="0 0 24 24"><path d="M12 12l11 10" stroke="#8a6d1d" stroke-width="5"/><path d="M12 12l11 10" stroke="#ead08a" stroke-width="3.200"/><path d="M0 4l4 3 3-1V2L4 0q5-1 7 3 1 2 0 4l4 4-3 3-4-4q-6 1-8-6z" fill="#f2f2f2" stroke="#666"/></svg>
  </div>
</header>

<main class="work">
  <aside class="layers">
    <div class="lhead"><span>Layers</span>
      <svg class="lb" viewBox="0 0 12 12"><rect x=".7" y=".7" width="10.600" height="10.600" rx="2" fill="none" stroke="#555"/><path d="M3 5h4v4H3zM5 5V3h4v4H7" fill="none" stroke="#555"/></svg>
      <svg class="lb" viewBox="0 0 12 12"><rect x=".7" y=".7" width="10.600" height="10.600" rx="2" fill="none" stroke="#555"/><path d="M3 3l6 6M9 3L3 9" stroke="#444" stroke-width="2"/></svg>
    </div>
    <div class="ltools">
      <svg viewBox="0 0 24 24"><path d="M2 9l7-3 3 3-8 5z" fill="#6a96c8"/><path d="M2 14l9-4 3 5-8 5z" fill="#e86a4a"/><path d="M9 8l5-3 3 3-3 4z" fill="#f2d84c"/><path d="M8 12l5-4 5 5-6 8-6-2z" fill="#e0b060" stroke="#a8782c" stroke-width=".7"/><path d="M15 10l7-7" stroke="#dc9a2c" stroke-width="2.500"/></svg>
      <svg viewBox="0 0 24 24"><use href="#sheets"/><circle cx="19" cy="19" r="4" fill="#5fae6c"/><path d="M19 16.500v5M16.500 19h5" stroke="#fff" stroke-width="1.500"/></svg>
      <svg viewBox="0 0 24 24"><path d="M1 11q10-10 20 0-10 9-20 0z" fill="#f6f6f6" stroke="#888"/><circle cx="11.500" cy="10.500" r="4.500" fill="#4a77a8"/><circle cx="11.500" cy="10.500" r="2" fill="#123"/><path d="M1 7q10-8 21 0" fill="none" stroke="#aaa" stroke-width="1.500"/><path d="M17 19h7l-3.500 4z" fill="#444"/></svg>
      <svg viewBox="0 0 24 24"><path d="M1 2h20l-8 9v11H9V11z" fill="#6a96c8" stroke="#3f6896"/><path d="M1 1h20v4H1z" fill="#f2dc3c"/><path d="M17 19h7l-3.500 4z" fill="#444"/></svg>
      <svg class="off" viewBox="0 0 24 24"><use href="#fn" x="-2" y="-3"/><path d="M13 21v-8h8v8M17 13v8" stroke="#888" stroke-width="2" fill="none"/></svg>
      <b class="dd"></b>
      <svg viewBox="0 0 24 24"><path d="M1 3h12M3 3v17h4M3 10h4" stroke="#888" fill="none" stroke-width="1.500"/><path d="M7 7h5v5H7zM7 16h5v5H7z" fill="#ffb347" stroke="#f57c00" stroke-width="1.500"/><path d="M14 3h5v10h4l-6.500 7L10 13h4z" fill="#5d8fcb" stroke="#3c6594"/></svg>
      <svg viewBox="0 0 24 24"><path d="M1 3h12M3 3v17h4M3 10h4" stroke="#888" fill="none" stroke-width="1.500"/><path d="M7 7h5v5H7zM7 16h5v5H7z" fill="#ffb347" stroke="#f57c00" stroke-width="1.500"/><path d="M14 21h5V10h4l-6.500-8L10 10h4z" fill="#5d8fcb" stroke="#3c6594"/></svg>
      <svg viewBox="0 0 24 24"><path d="M2 3h17v17H2z" fill="#efefef" stroke="#777" stroke-width="1.400"/><rect x="14" y="16" width="10" height="6.500" rx="2" fill="#f03a3a"/><path d="M16 19.200h6" stroke="#fff" stroke-width="1.600"/></svg>
    </div>
    <div class="tree">
      <div class="rows">
        <div class="row"><i class="tw"></i><span class="cb"><svg><use href="#tick"/></svg></span><i class="ln"></i><b>Equator</b></div>
        <div class="row"><i class="tw"></i><span class="cb"><svg><use href="#tick"/></svg></span><i class="sw"></i><b class="u">TM_WORLD_BORDERS_SIMPL-0.3</b></div>
        <div class="row"><i class="tw open"></i><span class="cb"><svg><use href="#tick"/></svg></span><svg class="s16" viewBox="0 0 24 24"><use href="#sheets"/></svg><span class="t nc">20230424090000-JPL-L4_GHRSST-SSTfnd-MUR</span></div>
        <div class="row l2"><i class="tw open"></i><span class="cb"><svg><use href="#tick"/></svg></span><svg class="s14" viewBox="0 0 12 12"><path fill="#c5d9ee" d="M0 0h12v12H0z"/><path fill="#22364c" d="M0 0h3v3H0zM6 0h3v3H6zM3 6h3v3H3zM0 9h3v3H0zM9 3h3v3H9zM6 9h3v3H6z"/><path fill="#6a8db4" d="M3 3h3v3H3zM6 6h3v3H6zM9 9h3v3H9z"/></svg><b>sst_anomaly</b><span class="qm">?</span></div>
        <div class="band">Band 1: time=1335171600 (seconds since 1981-01-01)</div>
        <div class="legend"><i></i><div><span>9.311</span><span>-8.052</span></div></div>
        <div class="row"><i class="tw"></i><span class="cb"></span><i class="ln pink"></i><b class="gi">ne_110m_geographic_lines</b></div>
      </div>
      <div class="hs hsl"><i class="ar l"></i><i class="th"></i><i class="ar r"></i></div>
    </div>
  </aside>
  <i class="split"></i>
  <section class="canvas">
    <div class="msg">
      <svg class="ok" viewBox="0 0 24 18"><path d="M1 6.500q3 1 4.500 4Q12 4 23.500.500 13 8 6.500 16.500 4 10 1 6.500z" fill="#2be02b" stroke="#0a6b12" stroke-width="1"/></svg>
      <b>Layer Exported:</b><span class="mt">Successfully saved vector layer to</span><u>/Users/sanchezj/Developer/DIA_EL_NINO/Equator.shp</u>
      <svg class="x" viewBox="0 0 18 18"><circle cx="9" cy="9" r="8.500" fill="#2e2e2e"/><path d="M5.500 5.500l7 7M12.500 5.500l-7 7" stroke="#fff" stroke-width="2.400"/></svg>
    </div>
    <svg class="map" viewBox="359 153 1352 1256">
      <defs>
        <filter id="soft" x="0" y="0" width="1" height="1" color-interpolation-filters="sRGB"><feTurbulence type="fractalNoise" baseFrequency=".012 .022" numOctaves="5" seed="7"/><feColorMatrix values=".24 0 0 0 .355 .24 0 0 0 .355 .24 0 0 0 .355 0 0 0 0 1"/></filter>
        <filter id="rough" x="0" y="0" width="1" height="1" color-interpolation-filters="sRGB"><feTurbulence type="turbulence" baseFrequency=".035 .05" numOctaves="4" seed="12"/><feColorMatrix values=".75 0 0 0 .34 .75 0 0 0 .34 .75 0 0 0 .34 0 0 0 0 1"/></filter>
        <filter id="blur"><feGaussianBlur stdDeviation="16"/></filter>
        <filter id="blur2" x="-.5" y="-.5" width="2" height="2"><feGaussianBlur stdDeviation="3"/></filter>
        <filter id="coast" x="-.02" y="-.02" width="1.04" height="1.04"><feTurbulence type="fractalNoise" baseFrequency=".05" numOctaves="3" seed="3"/><feDisplacementMap in="SourceGraphic" scale="20" xChannelSelector="R" yChannelSelector="G"/></filter>
        <mask id="mz"><g filter="url(#blur)" fill="#fff"><path d="M1510 595l80-20h80v75l-60 20-120 0z" fill="#ddd"/><path d="M1490 650h170v60l-130-5z" fill="#666"/><path d="M1220 850l180 30 100 10-20 50-160-5-80-30z" fill="#aaa"/><path d="M1240 770l160 40 100 70 150-10v70l-300-20-130-60z" fill="#666"/></g></mask>
        <linearGradient id="fade" x1="0" y1="0" x2="0" y2="1"><stop offset="0" stop-color="#757575"/><stop offset="1" stop-color="#757575" stop-opacity="0"/></linearGradient>
        <linearGradient id="fade2" x1="0" y1="1" x2="0" y2="0"><stop offset="0" stop-color="#757575"/><stop offset="1" stop-color="#757575" stop-opacity="0"/></linearGradient>
      </defs>
      <path d="M369 418h1290v605H369z" fill="#757575"/>
      <path d="M369 490h1290v490H369z" filter="url(#soft)"/>
      <g mask="url(#mz)"><path d="M1200 500h459v470H1200z" filter="url(#rough)"/></g>
      <path d="M369 488h1290v40H369z" fill="url(#fade)"/>
      <path d="M369 945h1290v36H369z" fill="url(#fade2)"/>
      <path d="M1522 608l22-14 22-4-10 10-22 6-12 6z" fill="#f0f0f0" opacity=".85" filter="url(#blur2)"/>
      <path d="M1635 522l24-6v10z" fill="#aaa" filter="url(#blur2)"/>
      <path d="M1530 962q70-4 129 8v6q-70-12-129-8z" fill="#9a9a9a" opacity=".7" filter="url(#blur2)"/>
      <g transform="translate(1210 410) scale(.3333)" class="land" filter="url(#coast)">
        <path d="M50 243L130 250 148 255 133 238 140 222 165 206 190 212 195 240 205 262 180 275 158 274 190 280 210 262 250 262 212 255 205 235 235 222 290 232 300 228 260 215 282 205 330 205 350 186 410 178 480 172 530 160 575 168 630 172 625 185 545 210 630 196 660 203 740 210 800 212 820 230 860 222 910 228 955 210 1020 222 1060 232 1125 233 1145 250 1180 243 1240 247 1250 240 1310 248 1346 250V292L1290 296 1330 303 1340 318 1290 326 1240 347 1200 342 1165 352 1160 390 1130 418 1095 442 1085 400 1095 375 1140 355 1165 338 1190 320 1170 322 1130 337 1130 328 1100 332 1060 355 1020 352 940 356 900 382 865 405 905 410 930 425 920 462 895 500 865 525 820 530 790 560 780 575 800 600 800 618 775 620 770 590 755 565 720 575 700 590 680 575 720 558 735 562 722 590 695 612 710 640 720 660 715 690 690 732 640 748 605 765 570 765 548 790 560 808 580 830 585 860 570 880 545 883 540 895 515 860 490 850 478 862 486 900 520 940 527 978 497 950 475 905 465 850 455 805 435 820 425 795 400 740 355 760 345 775 310 800 275 825 270 880 245 905 215 850 195 800 195 760 170 765 125 720H50z"/>
        <path d="M60 415L110 402 170 398 185 408 235 410 275 440 320 448 350 462 380 455 465 455 470 435 510 442 520 455 600 465 700 452 705 425 735 418 770 425 785 460 820 478 858 475 850 505 825 508 822 530 M350 465L305 488 300 505 275 512 275 540 220 568 M350 465L385 480 390 505 450 535 540 545 610 530 620 512 660 505 700 490 660 470 662 458 M60 517L120 525 145 550 170 545 190 540 270 535 M150 555L200 550 230 560 M60 550L100 575 145 590 150 565 170 570 215 575 220 592 M60 600L100 610 140 592 175 585 180 600 165 640 130 660 125 672 70 675 M60 650L75 680 90 700 80 720 M180 600L235 608 250 620 210 620 215 660 170 695 162 710 172 735 M220 592L255 610 265 650 290 670 360 690 400 700 450 680 470 690 470 720 490 760 M290 672L275 685 330 710 365 708 M365 690L370 705 400 702 M360 712L370 740 400 745 405 715 M440 700L420 720 410 755 M490 760L470 780 460 800 M490 760L515 760 530 790 550 815 555 835 565 840 540 845 M465 790L490 810 520 800 M520 845L550 838 570 870 M515 760L530 745 560 750 M760 560L790 575"/>
        <path d="M64 184l85-16-40 14-45 10zM64 122l45 0-45 6zM390 130l50-8 25 8 15 8-50 2zM480 150l40-10 25 5-30 8zM735 207l40-6 30 12-30 2zM885 182l40-10 45 8-50 8zM980 184l50 2-40 2zM915 203l30-4 10 5zM940 418l10 0 15 48-15-2-5 32-10 0zM935 508l40 16-30 10-18 14-8-12zM928 552l8 20-10 40-60 20-40 8-15-12 40-10 50-20 8-40zM810 635l18 6-5 18-12-6zM718 722l0 18-10 14-5-12zM583 785l18-5 2 5-18 12zM270 890l10 0 10 28-12 10-8-20zM705 795l18 2 0 38-14 15-5-30zM730 845l14 6 14 30-14-8zM745 910l22-20 3 32-15 6z"/>
        <path d="M435 935L465 950 500 985 530 1010 550 1035 548 1055 520 1040 485 990 460 965zM585 980L625 968 655 945 665 925 690 935 680 950 675 970 680 1000 672 1020 655 1032 600 1020 590 1005zM695 985L740 985 760 970 755 990 712 997 720 1015 737 1042 712 1022 705 1055 698 1020 692 1010z"/>
        <path class="dots" d="M975 520L1095 445M800 690L770 720 725 735M1195 400l30 6M1265 425l80 12M405 835l5 60 20 40M975 770l3 50-10 30M200 880v90M700 860l-30 50M720 740v60M725 840l40 60M735 855l30 20M770 940l-60 60M780 970l20 30M1270 960l30 50M130 250l20-30M230 235l70-30M290 190l60-10M390 130l40-10M440 135l130 22M380 165l130 0M800 215l60 15M900 225l60-18M1180 240l60 0M230 136h16M260 122h14M380 120h20M870 180l50 10M1010 168h8M1095 163h6M635 200h60M740 200l60 10M590 970l60-20"/>
      </g>
      <g transform="translate(1210 740) scale(.3333)" class="land" filter="url(#coast)">
        <path d="M630 250L638 238 680 225 720 210 730 185 750 172 775 152 790 165 805 160 808 142 820 135 880 135 870 165 890 180 922 190 935 170 938 130 943 120 955 152 970 160 985 205 1020 240 1040 255 1055 275 1060 320 1045 355 1030 380 1022 405 985 412 970 418 920 410 905 390 890 380 892 355 872 375 845 348 810 340 770 350 740 365 710 368 680 380 650 372 655 340 630 285z"/>
        <path d="M970 442l35 0-5 22-15 8-12-12zM1270 375l30 30 30 5-25 36-15-5 5-30zM1270 442l15 10-25 22-30 25-25 2 5-12 38-22zM545 68l80 8 20 15-50 0zM820 12l30 0 5 12-20 6zM862 45L880 25 900 20 928 30 970 42 995 70 990 80 1030 115 1005 110 960 88 930 103 905 90 895 65 870 50zM990 70l40-2 15-20-10 24z"/>
        <path d="M928 30v70M640 92l60 2 70 4 30-10 20 2" fill="none"/>
        <path d="M50 729L160 730 142 758 135 775 155 781 178 772 190 755 245 745 295 726 345 720 360 716 365 721 440 717 490 719 500 711 560 713 590 719 620 711 680 722 770 717 795 723 815 716 855 713 858 702 862 713 920 718 970 724 990 736 1060 743 1110 746 1150 758 1205 765 1247 772 1240 790 1205 797 1160 808 1160 828 1180 842 1205 846 1135 852 1112 864 1135 870 1150 882 1215 898 1346 908V969H50z"/>
        <path class="dots" d="M570 15l80 15M770 40l80-10M860 65l0 10M1070 60l50 40 35 20M1080 70l60 30M1205 150l10 60 20 10M1170 215l45 30M1315 195l30-10M1320 185l20-5M470 10l20 30M330 720l80-6M1150 712l35 14M740 20l0 30M150 530l20 5M700 105l90-8M740 110l40-12M780 20l30-5M820 130l50-5M890 385l10-20M960 425l40 10M630 270v20M1050 60l20 60M1195 845l40-10"/>
      </g>
      <path d="M1220 1048h438v15h-438z" fill="#997eb5"/><path d="M1210 1063.500h448.500V1043" fill="none" stroke="#5d4e70"/>
      <path d="M1210 741h449M369 741h10" stroke="#8f5f48" stroke-opacity=".75" stroke-width="2"/>
      <path d="M369 1043h10v20h-10zM369 495l8 2v7l-8-3z" class="isl"/>
    </svg>
  </section>
</main>

<footer class="status">
  <div class="loc"><svg><use href="#lens"/></svg>Type to locate (⌘K)</div>
  <span class="s-l">Coordinate</span><span class="inp w79">-5.9°,156.1°</span>
  <svg class="mouse" viewBox="0 0 16 16"><g transform="rotate(35 8 8)"><rect x="4.500" y="2" width="7" height="13" rx="3.500" fill="#ddd" stroke="#222" stroke-width="1.600"/><path d="M4 7h8M8 2v5M6 9v4M9.500 9v4" stroke="#222" stroke-width="1.400"/></g><path d="M1 3l5 5M3 1l3 4M10 2l5 0" stroke="#333" stroke-width="1.300"/></svg>
  <span class="s-l c">Scale</span><span class="inp combo">1:81414856<i><em class="dn"></em></i></span>
  <svg class="lock" viewBox="0 0 14 18"><path d="M3.500 8V5q0-3.500 3.500-3.500T10.500 5v3" fill="none" stroke="#777" stroke-width="2"/><rect x="1" y="7.500" width="12" height="9" rx="1" fill="#555"/></svg>
  <span class="s-l d">Magnifier</span><span class="inp spin">100%<i><em class="up"></em><em class="dn"></em></i></span>
  <span class="s-l e">Rotation</span><span class="inp spin">0.0 °<i><em class="up"></em><em class="dn"></em></i></span>
  <span class="cb sc"><svg><use href="#tick"/></svg></span><span class="s-l f">Render</span>
  <svg class="dome" viewBox="0 0 24 24"><use href="#dome"/></svg><span class="s-l g">EPSG:4326</span>
  <svg class="bub" viewBox="0 0 16 16"><path d="M8 1q7.500 0 7.500 6T9 13.200L9.500 15.500 6.500 13Q.500 12 .500 7T8 1z" fill="#555"/><path d="M3.500 7h2M7 7h2M10.500 7h2" stroke="#fff" stroke-width="1.600"/></svg>
</footer>

<section class="dialog">
  <div class="title"><i class="tl red"></i><i class="tl gry"></i><i class="tl grn"></i><b>Project Properties — CRS</b></div>
  <div class="dbody">
    <nav class="side">
      <div class="search"><svg><use href="#lens"/></svg></div>
      <ul>
        <li><svg viewBox="0 0 24 24"><path d="M2 2l11 12" stroke="#ddd" stroke-width="2"/><path d="M9 10l4 4-8 9q-3 1-4.500-1z" fill="#2f5f9a" stroke="#1a3a66"/><path d="M13 12l9 9" stroke="#f07818" stroke-width="4.500"/><path d="M9 2q7-4 12 1l2 5-2 2-4-3-3 3-3-3q0-3-2-5z" fill="#2c3436"/></svg>General</li>
        <li><svg viewBox="0 0 24 24"><path d="M3 0h13l5 5v19H3z" fill="#fafafa"/><path d="M6 7h9M6 11h9M6 15h11M6 19h8" stroke="#999" stroke-width="1.300"/><path d="M13 14l1-4 7-8 3 2-7 9z" fill="#e8743a" stroke="#a0441c"/></svg>Metadata</li>
        <li><svg viewBox="0 0 24 24"><path d="M0 3h24v16H0z" fill="#f2f2f2" stroke="#ccc"/><path d="M3.500 5h18v11h-18z" fill="#bcd9f4" stroke="#777"/><path d="M4 5.500h7l-1 4-4 2-2-2zM13 5.500h8v5l-3-1-3 4-5 1 3-5zM5 15.500l2-2 3 2z" fill="#5c8fc9"/><path d="M14 15.500l8-4v5z" fill="#444"/></svg>View Settings</li>
        <li class="sel"><svg class="big" viewBox="0 0 24 24"><circle cx="12" cy="13.500" r="9" fill="#9fd0f4" stroke="#3f78b0"/><path d="M3 14h18M12 5v18M8 6q-4 8 0 16M16 6q4 8 0 16M4 18h16" stroke="#4a86c0" fill="none"/><path d="M0 10Q5 2 12 1.500 19 2 24 10l-4 1-3-1-5 2-5-2-3 1z" fill="#c6c6c6" stroke="#666" stroke-width=".8"/><path d="M8 2.500L6 10M12 1.500V12M16 2.500l2 7.500M4 5.500h16M2 8h20" stroke="#666" stroke-width=".7"/></svg>CRS</li>
        <li><svg viewBox="0 0 24 24"><circle cx="12" cy="12" r="11" fill="#7ab4e6" stroke="#3a6ea5"/><path d="M1.500 12h21M12 1q-9 11 0 22M12 1q9 11 0 22M3 6h18" stroke="#dff0ff" fill="none"/><path d="M5 19q6-9 16-2-6 7-14 5z" fill="#c8c8c8"/><path d="M12 3v9l8 6M12 12l-7 6" stroke="#234" fill="none"/><g fill="#123"><circle cx="12" cy="3" r="1.500"/><circle cx="12" cy="12" r="1.700"/><circle cx="19.500" cy="17.500" r="1.500"/><circle cx="5" cy="18" r="1.500"/></g></svg>Transformations</li>
        <li><svg viewBox="0 0 24 24"><path d="M2 4l9-1 8 4-8 6z" fill="#f5e64c"/><path d="M1 11l8-4 5 5-8 4z" fill="#5c93d0"/><path d="M0 15l8-1 5 6-10 1z" fill="#d83030"/><path d="M8 10l5-2 6 5-6 9-8-4q3-2 3-8z" fill="#e6b866" stroke="#a8782c"/><path d="M15 10l8-9" stroke="#dc9a2c" stroke-width="3"/></svg>Styles</li>
        <li><svg viewBox="0 0 24 24"><path d="M1.500 2.500h21v19h-21z" fill="#f4f8fc" stroke="#9bbcdc"/><path d="M2 3h20v4.500H2z" fill="#9ac3ea"/><path d="M4 10.500h4M4 13h4M4 15.500h4M4 18h4M10 10.500h4.500M10 13h4.500M10 15.500h4.500M10 18h4.500M16.500 10.500h4M16.500 13h4M16.500 15.500h4M16.500 18h4M4 5.500h8M14 5.500h6" stroke="#5c86b4" stroke-width="1.200"/></svg>Data Sources</li>
        <li><svg viewBox="0 0 24 24"><path d="M12 6h5v8" stroke="#356" fill="none"/><path d="M0 0h11v12.500H0zM13 12h11v12.500H13z" fill="#ececec" stroke="#bbb"/><path d="M1 3h9M1 6h9M1 9h9M4 2v10M7.500 2v10M14 15h9M14 18h9M14 21h9M17 14v10M20.500 14v10" stroke="#999"/></svg>Relations</li>
        <li><svg viewBox="0 0 24 24"><path d="M17 6.500C17 2 6 1 6 6.500c0 3.500 3 4.500 7 4.500-5 0-8.500 1.500-8.500 5.500 0 6.500 13 6.500 13 0" fill="none" stroke="#663a70" stroke-width="2.600"/></svg>Variables</li>
        <li><svg viewBox="0 0 24 24"><circle cx="15" cy="9.500" r="9" fill="none" stroke="#eee" stroke-width="2.500" stroke-dasharray="3.600 2.050"/><circle cx="15" cy="9.500" r="8" fill="#eee"/><circle cx="15" cy="9.500" r="5.800" fill="#4f86c6" stroke="#3a6698"/><path d="M13 6.500l6 3-6 3z" fill="#fff"/><circle cx="4" cy="20" r="3.500" fill="#6a9ad4" stroke="#dde" stroke-width="1.500" stroke-dasharray="2 1"/></svg>Macros</li>
        <li><svg viewBox="0 0 24 24"><path d="M15 9v8M8 14h9" stroke="#ddd" stroke-width="1.300"/><g fill="#1e4f9a" stroke="#a9b8a9" stroke-width="1"><path d="M11.500 1h8v6.500h-8zM.500 8h8v6.500h-8zM16.500 13h8v6.500h-8z"/></g><path d="M11 9h9v1.500h-9zM0 16h9v1.500H0zM16 21h9v1.500h-9z" fill="#ddd"/></svg>QGIS Server</li>
        <li><svg viewBox="0 0 24 24"><circle cx="12" cy="12" r="12" fill="#fafafa"/><circle cx="12" cy="12" r="9.800" fill="none" stroke="#4a86cc" stroke-width="1.500" stroke-dasharray="1.600 3.530"/><path d="M12 3v9.500l5.500 4" stroke="#777" fill="none" stroke-width="1.600"/></svg>Temporal</li>
        <li><svg viewBox="0 0 24 24"><path d="M0 19Q4 14 5 5q5-4 10-2t9 0v17q-6-2-12-1t-12 0z" fill="#eee" stroke="#bbb"/><path d="M4 9q6-2 9 0t11 0M2 14q6-2 10-1t12 1M10 3q2 8-4 16M16 4q2 8-1 15M20 3v16" stroke="#999" fill="none" stroke-width=".9"/></svg>Terrain</li>
      </ul>
    </nav>
    <div class="dmain">
      <h2>Project Coordinate Reference System (CRS)</h2>
      <div class="group">
        <label class="nocrs"><span class="cb"></span>No CRS (or unknown/non-Earth projection)</label>
        <div class="filter"><span>Filter</span><div><svg><use href="#lens"/></svg></div></div>
        <h3 class="a">Recently Used Coordinate Reference Systems</h3>
        <div class="tbl t1">
          <div class="th-row"><span>Coordinate Reference System</span><span>Authority ID</span></div>
          <div class="tr"><span>WGS 84</span><span>EPSG:4326</span></div>
          <div class="tr hi"><span>globe_enso</span><span>USER:100000</span></div>
          <div class="tr"><span class="wide">North_Pole_Orthographic</span><span>ESRI:102035</span></div>
          <div class="tr alt"><span class="wide">WGS_1984_California_Teale_Albers_FtUS</span><span>ESRI:102599</span></div>
          <div class="tr"><span>WGS 84 / Pseudo-Mercator</span><span>EPSG:3857</span></div>
          <div class="hs end"><i class="ar l"></i><i class="th"></i><i class="ar r"></i></div>
        </div>
        <div class="pre"><h3>Predefined Coordinate Reference Systems</h3><label><span class="cb"></span>Hide deprecated CRSs</label></div>
        <div class="tbl t2">
          <div class="scroller">
            <div class="col">
              <div class="th-row"><span>Coordinate Reference System</span><span>Authority ID</span></div>
              <div class="tr alt i3"><span class="und">Sphere_Patterson</span><span>ESRI:53079</span></div>
              <div class="tr i3"><span class="und">World_Patterson</span><span>ESRI:54079</span></div>
              <div class="tr alt i2"><span><i class="tri"></i><em>times</em></span></div>
              <div class="tr i3"><span class="und">Sphere_Times</span><span>ESRI:53048</span></div>
              <div class="tr alt i3"><span class="und">World_Times</span><span>ESRI:54048</span></div>
              <div class="tr i2"><span><i class="tri"></i><em>van der Grinten (I)</em></span></div>
              <div class="tr alt i3"><span class="vdg">Sphere_Van_der_Grinten_I</span><span>ESRI:53029</span></div>
              <div class="tr i3"><span class="vdg">World_Van_der_Grinten_I</span><span>ESRI:54029</span></div>
              <div class="tr alt i1"><span><i class="tri"></i><svg class="user" viewBox="0 0 14 14"><path d="M7 .300q3.700 0 3.500 4Q10.300 7.500 8.700 9q0 1.500 2.300 2 2.500.500 2.500 2.700H.500Q.500 11.500 3 11q2.300-.500 2.300-2Q3.700 7.500 3.500 4.300 3.300.300 7 .300z" fill="#2a1414"/></svg><em class="ud"><b>User Defined Coordinate Systems</b></em></span></div>
              <div class="tr cur i0"><span class="und">globe_enso</span><span>USER:100000</span></div>
            </div>
            <div class="vs"><i class="ar u"></i><i class="tk"></i><i class="thv"></i><i class="ar d"></i></div>
          </div>
          <div class="hs"><i class="ar l"></i><i class="th"></i><i class="tkh"></i><i class="ar r"></i><i class="cn"></i></div>
        </div>
        <div class="bottom">
          <div class="info-box">
            <div class="txt">
              <h4>globe_enso</h4>
              <h5>Properties</h5>
              <ul><li>Units: meters</li><li>Static (relies on a datum which is plate-fixed)</li><li>Celestial body: Earth</li><li>Method: Orthographic</li></ul>
              <h5 class="wk">WKT</h5>
              <pre>PROJCRS["unknown",
    BASEGEOGCRS["unknown",
        DATUM["unknown",</pre>
            </div>
            <div class="vs"><i class="ar u"></i><i class="thv"></i><i class="tk"></i><i class="ar d"></i></div>
          </div>
          <svg class="prev" viewBox="12 12 999 516" preserveAspectRatio="none">
            <defs><filter id="coast2" x="-.02" y="-.02" width="1.04" height="1.04"><feTurbulence type="fractalNoise" baseFrequency=".06" numOctaves="2" seed="5"/><feDisplacementMap in="SourceGraphic" scale="12" xChannelSelector="R" yChannelSelector="G"/></filter></defs>
            <path d="M0 0h1020v540H0z" fill="#eed6f2"/><path d="M10 0h12v540H10z" fill="#fff"/><path d="M27 0h7v540h-7z" fill="#e4bdec"/>
            <g class="pl" filter="url(#coast2)">
              <path d="M36 84L70 78 138 76 190 82 260 80 300 88 345 92 310 98 290 96 262 100 285 118 305 124 318 104 340 100 350 118 368 134 340 136 325 142 312 160 300 172 295 180 302 200 290 186 265 186 252 198 258 216 272 218 285 212 280 228 296 238 290 236 262 222 236 212 218 196 208 178 190 164 184 134 160 112 135 98 105 106 80 104 70 88z"/>
              <path d="M340 44L400 40 465 46 460 72 422 86 398 104 378 78 363 54zM190 70L210 58 260 50 305 44 290 58 320 66 345 92 320 98 280 80 240 84zM448 88l20-3 8 5-16 4z"/>
              <path d="M305 240L330 230 370 246 380 262 418 278 408 302 385 320 375 335 355 345 345 362 330 385 328 400 335 406 320 402 314 380 322 330 322 310 302 285 300 265z"/>
              <path d="M498 168L535 164 545 176 605 178 622 222 632 232 655 230 620 268 616 294 600 315 590 340 565 352 555 335 545 310 546 280 535 256 505 245 482 246 468 224 470 205z"/>
              <path d="M626 312L640 292 645 300 636 326 628 328zM812 326L838 312 856 294 875 298 880 308 886 290 898 314 916 336 914 350 900 366 882 362 856 346 824 354 816 340zM894 366l8 2-4 8zM965 350l18 14-12 8zM970 370l-16 14 0-4z"/>
              <path d="M490 150L488 165 505 165 520 152 540 146 560 160 575 158 585 164 625 164 612 172 600 180 620 222 655 208 668 192 650 186 632 172 650 184 690 192 705 200 722 244 735 215 750 196 762 200 775 230 782 250 788 262 776 238 790 240 800 226 785 208 820 202 835 185 828 158 845 165 850 172 848 152 870 148 888 130 880 112 905 104 940 98 925 124 945 96 985 92 988 78 900 70 840 72 760 62 700 72 640 84 600 92 585 74 560 76 535 96 545 112 525 128 505 135 510 148zM486 122l8-12 12 18-14 6z"/>
              <path d="M780 272L802 250 812 256 802 274zM756 240L796 284 836 290 796 288 770 262zM866 264L890 268 920 290 890 282 870 278zM858 172L882 160 884 130 892 138 886 156 866 170z"/>
              <path d="M36 486L75 484 100 468 130 460 240 458 300 450 345 432 330 455 300 468 350 476 380 475 420 468 480 448 560 446 650 438 690 446 700 442 770 436 870 440 960 455 940 465 935 475 950 480 985 484 988 498H36z"/>
              <path class="thin" d="M138 76v28M186 132h96l16 10 40-8M214 178l28 10 20 14M495 195l30-16M540 165v35l-16 12M578 176v24l-38-10M605 176v30h-27v26l-22-8M480 215l30 5 0-30M550 205l-5 40M520 212l25 2 15 30 50 5 12-12M600 210l10 25M555 250h50M548 270l45 10 5 30M545 306l40 2 20-12M570 310v30M500 220v25M520 215v25M580 250l-8 30M590 280l25-2M640 125l45-6 30-5 30 16 50-2 30-8 40 20M700 155l-40-10-20-20M745 130l-40 25 0 18M745 130q30 26 70 12l18-16M680 165l-30-15M672 192l12-20 22-20M600 155l40 8 20 30M625 164l10-20M750 190l30 5M720 175l40 14M320 232l10 25 30 8M330 257l-28 10M330 290l30 10 8 30-20-5M330 310l20 25M330 330l-6 60M560 105l40 14 40 6M530 120l25 6 25 14M540 80l-8 24M590 80l-10 24M570 78v22M555 126v24M520 138l40 12M585 125l25 15-30 10"/>
              <path class="dash" d="M36 124l50-12M184 134l-32-32M204 180l30 30M190 62l120-14 40 30M200 70l80-4 40 20M220 76l90 4M350 44h110M540 52l60-2M640 48l40-2M300 180l30 26M330 208l20 20M318 310l-6 80M312 392l20 14M80 478l50-14M310 464l50-36M760 240l30 36 40 14M875 262l70 22M830 225l14 20M832 190l8 40M955 290l10 30M430 158l14 6M90 202l10 8M980 305h8M960 118l26 6M750 50l20 10 40 4M490 105l14 20M540 145l60 18M350 134l-40 20M555 150l20 14"/>
            </g>
            <path d="M528 261v36M510 278h36" stroke="#ba55d3" stroke-width="8"/>
          </svg>
        </div>
      </div>
      <div class="btns"><button>Help</button><button>Apply</button><button class="push">Cancel</button><button class="def">OK</button></div>
    </div>
  </div>
</section>
</body>
</html>
```

FILE: styles.css
```css
* { box-sizing: border-box; }
html, body { margin: 0; height: 100%; }
body { width: 1711px; height: 1439px; overflow: hidden; position: relative; display: flex; flex-direction: column; background: #ececec; font-family: Inter, "Liberation Sans", sans-serif; font-size: 13px; color: #262626; letter-spacing: 0; }
i { font-style: normal; }
.defs { position: absolute; }
h2, h3, h4, h5, ul, pre { margin: 0; padding: 0; }

/* toolbars */
.bar { height: 39px; border-bottom: 1px solid #b4b4b4; background: linear-gradient(#f5f5f5, #ebebeb); display: flex; align-items: center; }
.bar.third { height: 38px; }
.ic { width: 24px; height: 24px; margin: 0 4.5px; flex: none; overflow: visible; }
.off { opacity: .38; }
.off2 { opacity: .75; }
.btn { width: 31px; height: 31px; margin: 0 1px; border: 1px solid #a3a3a3; border-radius: 3px; background: #d6d6d6; display: flex; align-items: center; justify-content: center; }
.btn svg { width: 24px; height: 24px; }
.grip { width: 4px; height: 17px; margin: 0 4.100px 0 8.200px; flex: none; background: radial-gradient(circle, #a9a9a9 .7px, transparent .9px) 0 0 / 2.500px 3px; }
.second .grip { margin: 0 3.600px 0 8.200px; }
.bar .grip.first { margin: 0 3.200px 0 5px; }
.bar .grip.second { margin: 0 4px 0 9px; }
.dd { width: 12.100px; flex: none; height: 4px; }
.dd::before { content: ""; display: block; margin-left: 2px; width: 0; border: 3.200px solid transparent; border-top: 4px solid #505050; border-bottom: 0; }
.vsep { width: 1px; height: 19px; background: #c9c9c9; margin: 0 1px 0 4.800px; flex: none; }
.tagtx { font: bold 8px Inter, sans-serif; }
.t11 { font: 12px "DejaVu Sans", sans-serif; fill: #333; }
.info { font: italic bold 14px "Liberation Serif", serif; fill: #fff; }
.q { font: bold 14px "DejaVu Serif", serif; fill: #fff; }
.xy { font: bold 10.500px Inter, sans-serif; fill: #888; }
.vio { color: #5c3566; }

/* layers panel */
.work { display: flex; height: 1293px; }
.layers { width: 352px; display: flex; flex-direction: column; }
.lhead { height: 22px; display: flex; align-items: center; padding: 0 0 0 4px; font-size: 11.500px; }
.lhead span { flex: 1; }
.lb { width: 12px; height: 12px; margin-right: 2px; }
.ltools { height: 29px; padding: 0 0 2px 8px; display: flex; align-items: center; gap: 8.500px; }
.ltools svg { width: 16.500px; height: 16.500px; overflow: visible; }
.ltools .dd { width: 8px; margin: 0 -1px 0 -4px; }
.tree { flex: 1; background: #fff; border: 1px solid #b0b0b0; display: flex; flex-direction: column; justify-content: space-between; }
.rows { overflow: hidden; white-space: nowrap; padding-top: .5px; }
.row { height: 18px; display: flex; align-items: center; position: relative; }
.row b { letter-spacing: .1px; }
.l2 { padding-left: 20px; }
.tw { width: 23px; flex: none; }
.tw.open::before, .tri { content: ""; display: inline-block; width: 0; height: 0; border: 4.500px solid transparent; border-top: 5px solid #555; border-bottom: 0; vertical-align: 3px; margin-left: 5.500px; }
.cb { width: 14px; height: 14px; background: #fff; border: 1px solid #b2b2b2; display: inline-block; flex: none; }
.cb svg { width: 12px; height: 12px; display: block; }
.ln { width: 16px; height: 2px; background: #d9c3b4; margin: 0 6px; }
.ln.pink { background: #fbdde4; }
.sw { width: 16px; height: 16px; background: #997eb5; border: 1px solid #7c6498; margin: 0 6px; }
.s16 { width: 15px; height: 15px; margin: 0 7px 0 6px; flex: none; }
.s14 { width: 13px; height: 13px; margin: 0 7px 0 8px; }
.row b.u { text-decoration: underline; letter-spacing: .48px; }
.nc { letter-spacing: .2px; }
.qm { margin-left: auto; margin-right: 4px; width: 17px; height: 16px; border: 1px solid #ddd; background: #f4f4f4; text-align: center; font-weight: 800; line-height: 15px; color: #666; }
.band { height: 17px; line-height: 17px; padding-left: 63px; }
.legend { display: flex; padding-left: 63px; height: 97px; }
.legend i { width: 16px; height: 96px; margin-top: 1px; background: linear-gradient(#fff, #000); }
.legend div { margin-left: 6px; height: 96px; display: flex; flex-direction: column; justify-content: space-between; letter-spacing: .4px; }
.row b.gi { font-style: italic; color: #8c8c8c; letter-spacing: .33px; }
.split { width: 6px; }

/* scrollbars */
.hs { height: 15px; border-top: 1px solid #b4b4b4; display: flex; background: #e2e2e2; flex: none; }
.ar { width: 14px; background: #f4f4f4; display: flex; align-items: center; justify-content: center; flex: none; border-right: 1px solid #b4b4b4; }
.ar.r { border-right: 0; border-left: 1px solid #b4b4b4; margin-left: auto; }
.ar::before { content: ""; border: 4px solid transparent; }
.ar.l::before { border-right: 5px solid #444; border-left: 0; }
.ar.r::before { border-left: 5px solid #444; border-right: 0; }
.ar.u::before { border-bottom: 5px solid #444; border-top: 0; }
.ar.d::before { border-top: 5px solid #444; border-bottom: 0; }
.th { flex: 1; background: linear-gradient(#fff, #f0f0f0); border-right: 1px solid #b4b4b4; }
.hsl .th { flex: none; width: 218px; }
.end .th { margin-right: 1px; }
.tkh { width: 15px; }
.cn { width: 14px; border-left: 1px solid #b4b4b4; background: #ececec; }
.vs { width: 14px; border-left: 1px solid #b4b4b4; background: #e2e2e2; display: flex; flex-direction: column; }
.vs .ar { width: 13px; height: 14px; border: 0; border-bottom: 1px solid #b4b4b4; }
.vs .ar.d { border-bottom: 0; border-top: 1px solid #b4b4b4; }
.vs .tk { flex: 1; }
.thv { background: linear-gradient(90deg, #fff, #f0f0f0); }
.t2 .thv { height: 27px; border-top: 1px solid #b4b4b4; }
.info-box .thv { height: 36px; border-bottom: 1px solid #b4b4b4; }

/* map canvas */
.canvas { flex: 1; background: #fff; border-left: 1px solid #8f9c8a; display: flex; flex-direction: column; }
.msg { margin-top: 1px; height: 36px; background: #dff0d8; border: 1px solid #92a38c; border-left: 0; border-right: 0; display: flex; align-items: center; font-size: 12.900px; color: #111; }
.msg b { letter-spacing: .12px; }
.ok { width: 24px; height: 17px; margin: 0 10px 0 9px; }
.mt { margin: 0 4px; }
.msg u { color: #2a8000; }
.x { width: 17px; height: 17px; margin-left: auto; margin-right: 21px; }
.map { width: 1352px; height: 1256px; flex: none; display: block; }
.land { fill: #997eb5; stroke: #3d3842; stroke-width: 3; stroke-linejoin: round; }
.land path:nth-child(2) { fill: none; }
.land + .land path:nth-child(2) { fill: #997eb5; }
.isl { fill: #997eb5; stroke: #3d3842; }
.land .dots { fill: none; stroke-dasharray: 6 9 3 12 9 7; stroke-width: 4; }

/* status bar */
.status { height: 30px; border-top: 1px solid #b4b4b4; display: flex; align-items: center; padding: 1.500px 0 0 4px; font-size: 11.500px; color: #111; white-space: nowrap; }
.loc { width: 214px; height: 23px; background: #fff; border: 1px solid #b0b0b0; border-radius: 2px; display: flex; align-items: center; gap: 8px; padding-left: 7px; font-size: 12.500px; color: #777; }
.loc svg { width: 13px; height: 13px; }
.s-l { width: 61px; margin-left: 660px; }
.inp { height: 22px; background: #fff; border: 1px solid #b0b0b0; border-radius: 2px; display: flex; align-items: center; padding-left: 7px; flex: none; }
.w79 { width: 80px; }
.mouse { width: 16px; height: 16px; margin: 0 13px 0 4px; }
.s-l.c { width: 32px; margin: 0; }
.combo { width: 93px; padding-left: 3px; }
.combo i, .spin i { margin-left: auto; height: 100%; width: 20px; border-left: 1px solid #b0b0b0; display: flex; flex-direction: column; gap: 5px; align-items: center; justify-content: center; }
.spin { width: 94px; padding-left: 5px; }
.spin i { width: 14px; }
.up { border: 3.500px solid transparent; border-bottom: 5px solid #555; border-top: 0; }
.dn { border: 3.500px solid transparent; border-top: 5px solid #555; border-bottom: 0; }
.lock { width: 13px; height: 17px; margin: 0 9px 0 12px; }
.s-l.d { width: 53px; margin: 0; font-size: 11.200px; }
.s-l.e { width: 53px; margin: 0 0 0 8px; font-size: 11.200px; }
.spin i { margin-right: 1px; }
.sc { margin: 0 4px 0 6px; }
.s-l.f { width: 38px; margin: 0; font-size: 11.200px; }
.dome { width: 15px; height: 15px; margin: 0 2px 0 15px; }
.s-l.g { width: 62px; margin: 0; font-size: 11.200px; }
.bub { width: 16px; height: 16px; margin-left: 22px; }

/* dialog window */
.dialog { position: absolute; left: 374px; top: 439px; width: 857px; height: 869px; border-radius: 10px; overflow: hidden; background: #e9e9e9; display: flex; flex-direction: column; }
.dialog { box-shadow: 0 0 1px rgba(0,0,0,.6), 0 18px 34px rgba(0,0,0,.42); }
.title { height: 28px; background: #f9f0ec; border-bottom: 1px solid #c9c3c0; display: flex; align-items: center; padding-left: 8px; color: #3f3f3f; }
.title b { width: 857px; margin-left: -67px; text-align: center; letter-spacing: .1px; }
.tl { width: 12px; height: 12px; border-radius: 50%; margin-right: 8px; flex: none; }
.red { background: #fe5850; border: 1px solid #e2443d; }
.gry { background: #dbd3d0; border: 1px solid #c8c0bd; }
.grn { background: #26c73f; border: 1px solid #1dad32; }
.dbody { flex: 1; display: flex; }
.side { width: 150px; background: #5b5b5b; color: #fff; }
.search { height: 24px; background: #fff; border: 1px solid #a5a5a5; padding: 4px 0 0 8px; }
.search svg { width: 13px; height: 13px; display: block; }
.side ul { list-style: none; margin-top: 6px; }
.side li { height: 36px; display: flex; align-items: center; gap: 8px; padding-left: 5px; font-size: 12.100px; }
.side li svg { width: 24px; height: 24px; overflow: visible; }
.side li.sel { background: #ececec; color: #222; padding-left: 6px; gap: 7px; }
.side li svg.big { width: 27px; height: 27px; }
.dmain { flex: 1; display: flex; flex-direction: column; }
h2, h3 { font-size: 13px; font-weight: 700; letter-spacing: .08px; }
h2 { height: 23px; line-height: 26px; padding-left: 5.500px; letter-spacing: .16px; }
.group { margin: 0 3px 0 5px; height: 784px; border: 1px solid #d2d2d2; border-radius: 3px; background: #e7e7e7; padding: 14px 11.500px 0 10px; display: flex; flex-direction: column; }
.nocrs { display: flex; height: 14px; margin-bottom: 1px; align-items: center; gap: 5px; font-size: 12.750px; }
.filter { height: 24px; margin-top: 9px; display: flex; align-items: center; }
.filter span { width: 37px; font-size: 12.500px; }
.filter div { flex: 1; height: 24px; background: #fff; border: 1px solid #adadad; border-radius: 2px; padding: 5px 8px; }
.filter svg { width: 13px; height: 13px; display: block; }
h3.a { height: 28px; line-height: 29px; }
.tbl { border: 1px solid #b0b0b0; background: #fff; display: flex; flex-direction: column; }
.t1 { height: 261px; }
.end { margin-top: auto; }
.th-row { height: 17px; background: linear-gradient(#fbfbfb, #ebebeb); border-bottom: 1px solid #b0b0b0; display: grid; grid-template-columns: 436px 1fr; font-size: 11.100px; line-height: 19px; color: #111; }
.th-row span { padding-left: 2px; }
.th-row span:first-child { border-right: 1px solid #c4c4c4; }
.tr { height: 16px; display: grid; grid-template-columns: 436px 1fr; line-height: 17px; font-size: 12.500px; white-space: nowrap; letter-spacing: .12px; }
.tr span { padding-left: 3.500px; }
.tr .wide { letter-spacing: .45px; }
.tr .und { letter-spacing: .24px; }
.tr .vdg { letter-spacing: .68px; }
.tr .ud { letter-spacing: .36px; }
.alt { background: #f3f5f5; }
.hi { background: #0a68e0; color: #fff; }
.pre { height: 30px; display: flex; align-items: center; justify-content: space-between; }
.pre label { display: flex; align-items: center; gap: 5px; font-size: 9.300px; padding: 0 6px 3px 0; }
.t2 { height: 213px; }
.scroller { flex: 1; display: flex; }
.col { flex: 1; }
.t2 .tr { height: 18px; line-height: 20px; }
.t2 .i3 span:first-child { padding-left: 63.500px; }
.t2 .i2 span { padding-left: 20px; }
.i2 em { margin-left: 9.500px; }
.t2 .i1 span { padding-left: 0; display: flex; align-items: center; }
.user { width: 14px; height: 14px; margin: 0 9px 0 9px; }
.t2 .i0 span:first-child { padding-left: 43.500px; }
.cur { background: #dcdcdc; color: #111; }
.bottom { margin-top: 4px; height: 174px; display: flex; gap: 6px; }
.info-box { width: 335px; border: 1px solid #b0b0b0; background: #fff; display: flex; overflow: hidden; }
.txt { flex: 1; overflow: hidden; padding-left: 4px; }
h4 { font-size: 13px; line-height: 18px; margin-top: 3px; letter-spacing: .15px; }
h5 { font-size: 11px; line-height: 14px; margin-top: 11px; }
.txt ul { list-style: none; margin-top: 12px; }
.txt li { font-size: 11px; line-height: 13px; padding-left: 62px; white-space: nowrap; letter-spacing: .05px; }
.txt li::before { content: "•"; margin-right: 2px; }
.txt .wk { margin-top: 11px; }
pre { font: 11px/13px "DejaVu Sans Mono", monospace; padding-left: 30px; letter-spacing: -.06px; margin-top: -1px; }
.prev { width: 334.500px; height: 174px; border: 1px solid #b0b0b0; display: block; }
.pl path { fill: #dfc4da; stroke: #a48ba2; stroke-width: 2; stroke-linejoin: round; }
.pl .thin { fill: none; stroke-width: 1.800; }
.pl .dash { fill: none; stroke: #8d748a; stroke-width: 3; stroke-dasharray: 9 3 4 4; }
.btns { display: flex; gap: 6px; padding: 7px 3px 0 4px; }
button { width: 80px; height: 25px; border: 1px solid #adadad; border-radius: 2px; background: linear-gradient(#fff, #f1f1f1); font: 12.500px Inter, sans-serif; color: #111; padding: 0; }
.push { margin-left: auto; }
.def { border-color: #4a96e8; background: linear-gradient(#fff, #dfe7f1); }
```
